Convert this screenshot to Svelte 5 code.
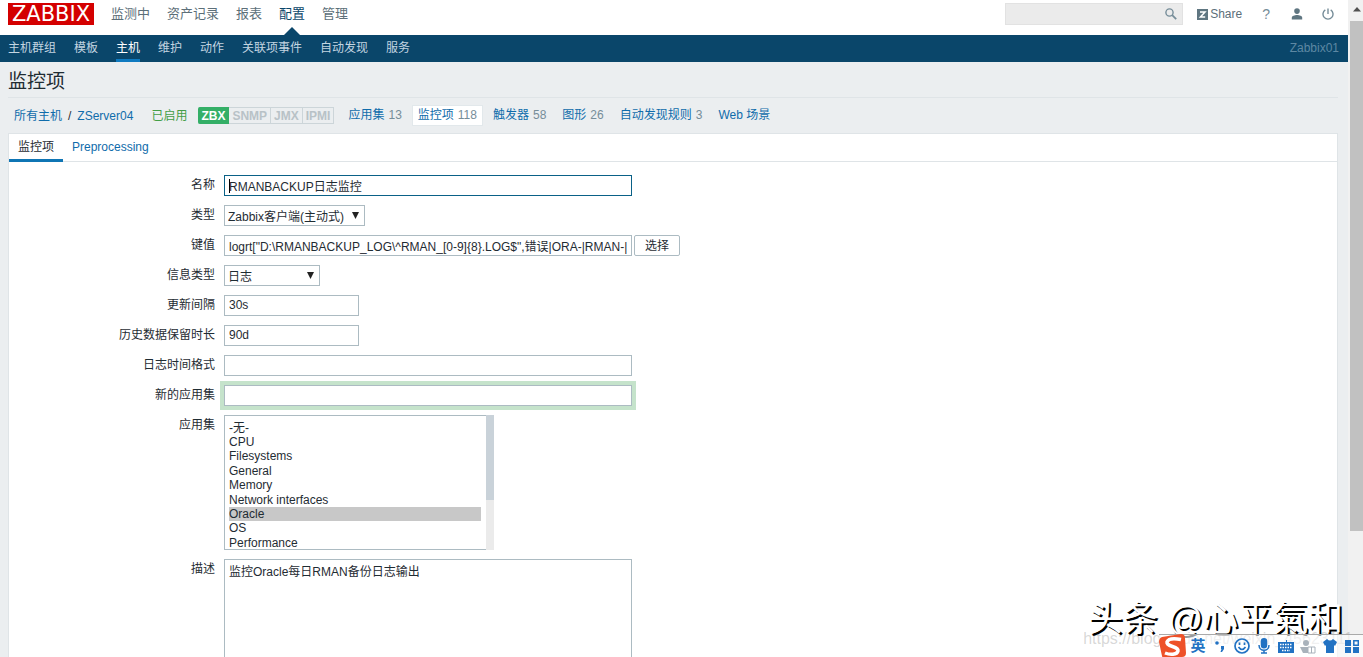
<script>
  const mainMenu = ['监测中', '资产记录', '报表', '配置', '管理'];
  const subMenu = ['主机群组', '模板', '主机', '维护', '动作', '关联项事件', '自动发现', '服务'];
  const hostTabs = [
    { name: '应用集', count: '13' },
    { name: '监控项', count: '118', active: true },
    { name: '触发器', count: '58' },
    { name: '图形', count: '26' },
    { name: '自动发现规则', count: '3' },
    { name: 'Web 场景', count: '' }
  ];
  const interfaces = ['ZBX', 'SNMP', 'JMX', 'IPMI'];
  const applications = ['-无-', 'CPU', 'Filesystems', 'General', 'Memory', 'Network interfaces', 'Oracle', 'OS', 'Performance'];

  let name = $state('RMANBACKUP日志监控');
  let key = $state('logrt["D:\\RMANBACKUP_LOG\\^RMAN_[0-9]{8}.LOG$",错误|ORA-|RMAN-|');
  let interval = $state('30s');
  let history = $state('90d');
  let logFormat = $state('');
  let newApp = $state('');
  let selectedApps = $state(['Oracle']);
  let description = $state('监控Oracle每日RMAN备份日志输出');
</script>

<div class="screen">
  <div class="page">
    <header class="top">
      <a class="logo" href="#home">ZABBIX</a>
      <nav class="main-menu">
        {#each mainMenu as item}
          <a href="#menu" class:active={item === '配置'}>{item}</a>
        {/each}
      </nav>
      <div class="tools">
        <div class="search">
          <input type="text" aria-label="Search" />
          <button type="button" aria-label="Search">
            <svg width="12" height="12" viewBox="0 0 12 12" fill="none" stroke="#768d99"><circle cx="4.5" cy="4.5" r="3.6" stroke-width="1.4" /><path d="M7.2 7.2 11.2 11.2" stroke-width="1.8" /></svg>
          </button>
        </div>
        <a class="share" href="#share">
          <svg width="11" height="11" viewBox="0 0 11 11"><path fill="#5f7681" d="M0 0h11v11H0z" /><path d="M3 3h5L3.4 8H8.2" fill="none" stroke="#fff" stroke-width="1.5" /></svg>Share</a>
        <a class="help" href="#help">?</a>
        <a class="icon" href="#profile" aria-label="Profile"><svg width="12" height="12" viewBox="0 0 12 12" fill="#5f7681"><circle cx="6" cy="3.1" r="2.8" /><path d="M.8 11.5V9.7C.8 7.9 3.6 7 6 7s5.2.9 5.2 2.7v1.8z" /></svg></a>
        <a class="icon" href="#logout" aria-label="Sign out"><svg width="12" height="12" viewBox="0 0 12 12" fill="none" stroke="#768d99" stroke-width="1.4"><path d="M6 .5v5.5M3.3 1.9a5 5 0 1 0 5.4 0" /></svg></a>
      </div>
    </header>

    <nav class="sub-menu">
      {#each subMenu as item}
        <a href="#sub" class:active={item === '主机'}>{item}</a>
      {/each}
      <span class="server">Zabbix01</span>
    </nav>

    <main>
      <h1>监控项</h1>

      <div class="crumbs">
        <a href="#hosts">所有主机</a><span class="slash">/</span><a href="#host">ZServer04</a>
        <span class="enabled">已启用</span>
        <span class="interfaces">
          {#each interfaces as item}<span class:on={item === 'ZBX'}>{item}</span>{/each}
        </span>
        <div class="host-tabs">
          {#each hostTabs as tab}
            <span class:active={tab.active}><a href="#tab">{tab.name}</a>{#if tab.count}<small>{tab.count}</small>{/if}</span>
          {/each}
        </div>
      </div>

      <section class="panel">
        <div class="tabs">
          <a href="#item" class="active">监控项</a>
          <a href="#pre">Preprocessing</a>
        </div>

        <form>
          <label for="name">名称</label>
          <div class="field"><input id="name" class="wide focused" type="text" bind:value={name} /><i class="caret"></i></div>

          <label for="type">类型</label>
          <div class="field"><select id="type" class="type"><option>Zabbix客户端(主动式)</option></select></div>

          <label for="key">键值</label>
          <div class="field"><input id="key" class="wide" type="text" bind:value={key} /><button type="button">选择</button></div>

          <label for="info">信息类型</label>
          <div class="field"><select id="info" class="info"><option>日志</option></select></div>

          <label for="interval">更新间隔</label>
          <div class="field"><input id="interval" class="short" type="text" bind:value={interval} /></div>

          <label for="history">历史数据保留时长</label>
          <div class="field"><input id="history" class="short" type="text" bind:value={history} /></div>

          <label for="format">日志时间格式</label>
          <div class="field"><input id="format" class="wide" type="text" bind:value={logFormat} /></div>

          <label for="newapp">新的应用集</label>
          <div class="field"><input id="newapp" class="wide fresh" type="text" bind:value={newApp} /></div>

          <label for="apps">应用集</label>
          <div class="field list">
            <select id="apps" multiple size="9" bind:value={selectedApps}>
              {#each applications as app}<option value={app}>{app}</option>{/each}
            </select>
            <div class="list-bar"><div></div></div>
          </div>

          <label for="desc">描述</label>
          <div class="field"><textarea id="desc" class="wide" rows="7" bind:value={description}></textarea></div>
        </form>
      </section>
    </main>
  </div>

  <div class="scrollbar">
    <svg width="8" height="5" viewBox="0 0 8 5"><path fill="#505050" d="M4 0 8 4.5H0z" /></svg>
    <div class="thumb"></div>
  </div>

  <div class="blog">https://blog.csdn.net/weixin_45623111</div>
  <div class="signature">头条 @心平氣和</div>
  <div class="ime">
    <span class="sogou"><svg width="28" height="27" viewBox="0 0 28 27"><path fill="#ee5128" d="M3 4 22 1q4 0 4 4l1 15q0 4-4 4L8 27q-4 0-5-4L0 9q0-4 3-5z" /><path d="M22 6.5Q10 4 8 9c-1 5 12 4 11 9-1 4-8 4-13 2" fill="none" stroke="#fff" stroke-width="3.5" /></svg></span>
    <b>英</b>
    <span><svg width="12" height="14" viewBox="0 0 12 14" fill="#2272c3"><circle cx="3" cy="4" r="1.8" /><path d="M7 7h3v3l-2 3H6.5l1-3H7z" /></svg></span>
    <span><svg width="16" height="16" viewBox="0 0 16 16" fill="none" stroke="#2272c3" stroke-width="1.7"><circle cx="8" cy="8" r="7" /><path d="M4.5 9q3.5 5 7 0" /><path d="M5.5 4.5v2.5M10.5 4.5v2.5" /></svg></span>
    <span><svg width="12" height="16" viewBox="0 0 12 16" fill="none" stroke="#2272c3" stroke-width="1.5"><rect x="3.5" y=".8" width="5" height="9" rx="2.5" fill="#2272c3" /><path d="M1 7c0 7 10 7 10 0M6 12v3M3 15h6" /></svg></span>
    <span><svg width="16" height="13" viewBox="0 0 16 13"><path fill="#2272c3" d="M0 2h16v11H0zM8 0h1v2H8z" /><path d="M2 4.5h12M2 7.5h12M4 10.5h8" stroke="#fff" stroke-width="1.4" stroke-dasharray="1.5 1" /></svg></span>
    <span><svg width="16" height="15" viewBox="0 0 16 15" fill="#a9b2bb"><circle cx="6" cy="4" r="3" /><path d="M0 8h8v6H3z" /><path d="M8 8h7v6H8zM11.5 8v6" fill="#fff" stroke="#a9b2bb" /></svg></span>
    <span><svg width="14" height="14" viewBox="0 0 14 14"><path fill="#2272c3" d="M4 0q3 3 6 0l4 3-2 4-1-1v8H3V6L2 7 0 3z" /></svg></span>
    <span><svg width="14" height="13" viewBox="0 0 14 13"><path fill="#2272c3" d="M0 0h6v6H0zM0 7h6v6H0zM8 7h6v6H8z" /><path fill="none" stroke="#2272c3" stroke-width="1.5" d="M8.8.8h4.5v4.5H8.8z" /></svg></span>
  </div>
</div>

<style>
  :global(body) { margin: 0; overflow: hidden; }
  .screen, .screen * { box-sizing: border-box; }
  .screen { position: relative; display: flex; height: 100vh; overflow: hidden; background: #ebeef0; color: #1f2c33; font: 12px/18px "Liberation Sans", "Noto Sans CJK SC", sans-serif; }
  a { color: #0f6cab; text-decoration: none; }
  input, select, textarea, button { margin: 0; font: inherit; color: inherit; border: 1px solid #acbbc2; border-radius: 0; background: #fff; outline: none; }
  .page { flex: 1; min-width: 0; }
  .top { display: flex; align-items: flex-start; height: 35px; padding: 3px 14px 0 8px; background: #fff; }
  .logo { width: 86px; height: 22px; background: #d40000; color: #fff; text-align: center; font: 21px/22px "DejaVu Sans", sans-serif; }
  .main-menu { display: flex; gap: 17px; margin-left: 17px; font-size: 13px; line-height: 21px; }
  .main-menu a { color: #5c6f79; height: 32px; }
  .main-menu .active { position: relative; color: #0a466a; }
  .main-menu .active::after { content: ""; position: absolute; left: 5px; bottom: 0; border: 8px solid transparent; border-top: 0; border-bottom-color: #0a466a; }
  .tools { display: flex; align-items: center; height: 22px; margin-left: auto; }
  .search { display: flex; width: 178px; height: 22px; background: #ebebeb; border: 1px solid #e2e2e2; }
  .search input { flex: 1; min-width: 0; border: 0; background: none; }
  .search button { display: flex; align-items: center; border: 0; padding: 0 5px; background: none; }
  .share { display: flex; align-items: center; gap: 2px; margin: 0 20px 0 14px; color: #5c6f79; }
  .help { margin-right: 21px; font-size: 14px; color: #768d99; }
  .icon { display: flex; margin-right: 19px; }
  .icon:last-child { margin-right: 0; }
  .sub-menu { display: flex; gap: 18px; height: 27px; padding: 0 9px 0 8px; background: #0a466a; line-height: 26px; }
  .sub-menu a { color: #c3d5e1; }
  .sub-menu .active { color: #fff; border-bottom: 3px solid #0f7ac0; }
  .server { margin-left: auto; color: #5d88a3; }
  main { padding: 0 10px 0 8px; }
  h1 { margin: 0; height: 36px; padding-top: 7px; border-bottom: 1px solid #dfe4e7; font-size: 19px; line-height: 26px; font-weight: 400; }
  .crumbs { display: flex; align-items: center; height: 35px; padding-left: 6px; }
  .slash { margin: 0 6px; }
  .enabled { margin: 0 11px 0 18px; color: #429e47; }
  .interfaces { display: flex; height: 17px; font-weight: 700; line-height: 17px; }
  .interfaces span { padding: 0 3px; border: 1px solid #ccd5d9; border-left: 0; color: #b8c2c7; line-height: 16px; }
  .interfaces .on { border-color: #34af67; background: #34af67; color: #fff; border-radius: 2px 0 0 2px; }
  .host-tabs { display: flex; gap: 4px; margin-left: 8px; }
  .host-tabs span { padding: 1px 5px; border: 1px solid transparent; line-height: 17px; }
  .host-tabs .active { background: #fff; border-color: #e2e8eb; }
  small { margin-left: 4px; font-size: 12px; color: #768d99; }
  .panel { border: 1px solid #dfe4e7; background: #fff; }
  .tabs { display: flex; height: 28px; border-bottom: 1px solid #dfe4e7; line-height: 26px; }
  .tabs a { height: 28px; padding: 0 9px; }
  .tabs .active { color: #1f2c33; border-bottom: 3px solid #0f75b4; }
  form { display: grid; grid-template-columns: 206px 1fr; column-gap: 9px; row-gap: 9px; padding-top: 13px; }
  label { text-align: right; line-height: 20px; }
  .field { position: relative; display: flex; gap: 2px; min-height: 21px; }
  .field input { height: 21px; padding: 0 4px 1px; }
  .wide { width: 408px; }
  .short { width: 135px; }
  .field .focused { border-color: #0a6187; }
  .caret { position: absolute; left: 5px; top: 4px; width: 1px; height: 14px; background: #000; }
  .field button { width: 46px; height: 21px; padding: 0; border-radius: 2px; }
  .type, .info { appearance: none; height: 21px; padding: 2px 3px 0; background: #fff url("data:image/svg+xml,%3Csvg xmlns='http://www.w3.org/2000/svg' width='7' height='7'%3E%3Cpath d='M0 0h7L3.5 7z' fill='%23222'/%3E%3C/svg%3E") no-repeat right 5px top 6px; }
  .type { width: 141px; }
  .info { width: 96px; }
  .field .fresh { box-shadow: 0 0 0 4px #c5e3cb; }
  .field.list { gap: 0; height: 135px; }
  .list select { width: 262px; height: 135px; padding: 2px 5px 0 4px; border-right: 0; overflow: hidden; }
  .list option { min-height: 1.2em; padding: 0; line-height: 14px; }
  .list option:checked { background: #c8c8c8 linear-gradient(#c8c8c8, #c8c8c8); color: #1f2c33; }
  .list-bar { width: 8px; background: #ebebeb; }
  .list-bar div { height: 85px; background: #c9d2d9; }
  textarea { display: block; height: 120px; padding: 3px 4px; resize: none; }
  .scrollbar { width: 15px; padding: 6px 0 0 2px; background: #f1f1f1; }
  .scrollbar svg { display: block; margin: 1px auto 9px; }
  .thumb { height: 510px; background: #c1c1c1; }
  .ime { position: absolute; right: 0; bottom: 0; display: flex; align-items: center; height: 23px; border-top: 1px solid #aaa; background: rgba(255, 255, 255, .6); }
  .ime span, .ime b { display: flex; justify-content: center; width: 22px; }
  .ime .sogou { width: 28px; }
  .ime b { color: #2272c3; font-size: 15px; }
  .blog { position: absolute; right: 10px; bottom: 9px; color: rgba(120, 120, 120, .3); font-size: 16px; }
  .signature { position: absolute; right: 20px; bottom: 18px; color: #fff; font-size: 35px; line-height: 40px; text-shadow: 2px 2px 0 #000; }
</style>
